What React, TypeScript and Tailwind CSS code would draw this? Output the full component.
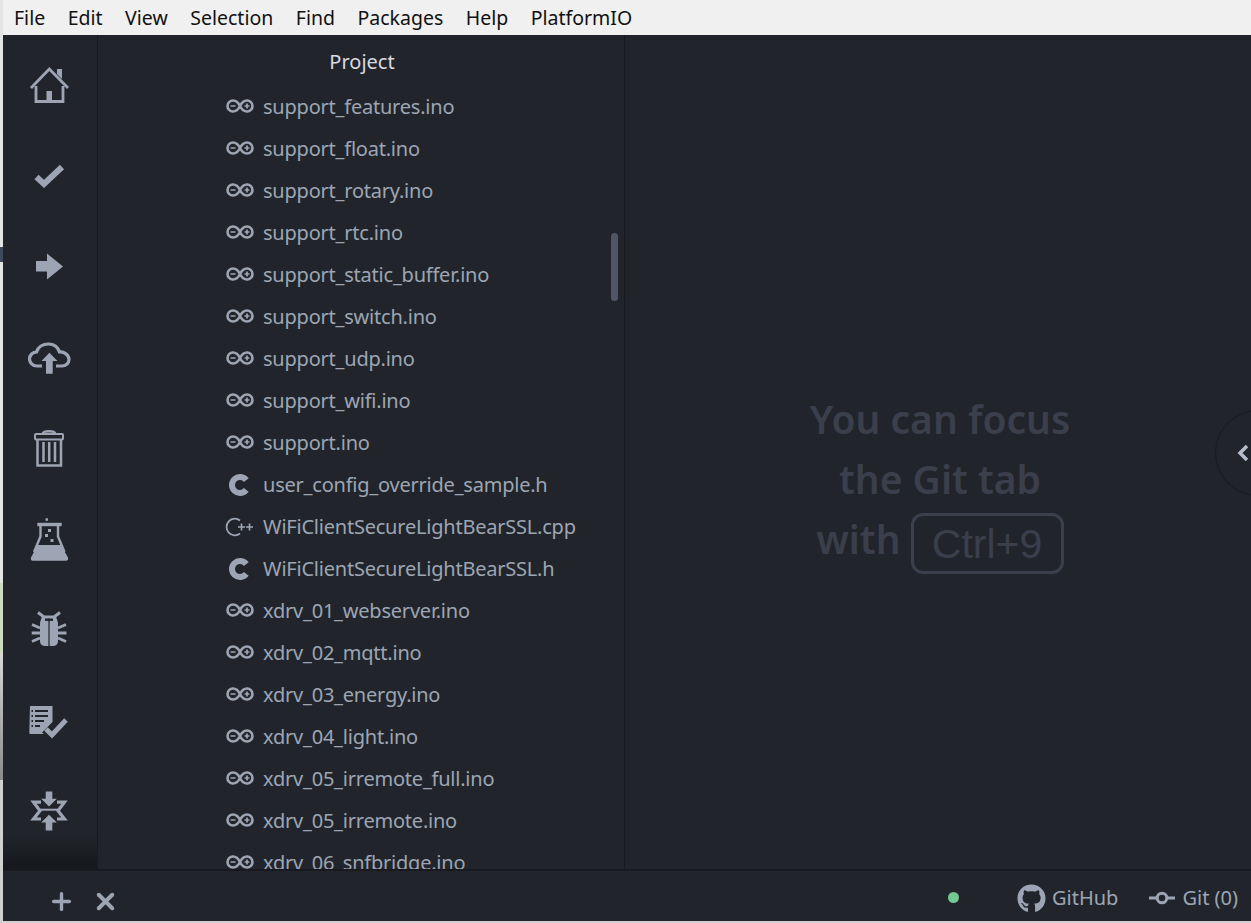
import { FaGithub } from 'react-icons/fa'
import { Plus, X } from 'lucide-react'

const menus = ['File', 'Edit', 'View', 'Selection', 'Find', 'Packages', 'Help', 'PlatformIO']

type Kind = 'ino' | 'c' | 'cpp'

const files: [string, Kind][] = [
  ['support_features.ino', 'ino'],
  ['support_float.ino', 'ino'],
  ['support_rotary.ino', 'ino'],
  ['support_rtc.ino', 'ino'],
  ['support_static_buffer.ino', 'ino'],
  ['support_switch.ino', 'ino'],
  ['support_udp.ino', 'ino'],
  ['support_wifi.ino', 'ino'],
  ['support.ino', 'ino'],
  ['user_config_override_sample.h', 'c'],
  ['WiFiClientSecureLightBearSSL.cpp', 'cpp'],
  ['WiFiClientSecureLightBearSSL.h', 'c'],
  ['xdrv_01_webserver.ino', 'ino'],
  ['xdrv_02_mqtt.ino', 'ino'],
  ['xdrv_03_energy.ino', 'ino'],
  ['xdrv_04_light.ino', 'ino'],
  ['xdrv_05_irremote_full.ino', 'ino'],
  ['xdrv_05_irremote.ino', 'ino'],
  ['xdrv_06_snfbridge.ino', 'ino'],
]

function FileIcon({ kind }: { kind: Kind }) {
  if (kind === 'ino') {
    return (
      <svg width="30" height="20" viewBox="0 1 30 20" fill="none" stroke="#9da5b4" className="shrink-0">
        <path d="M15 10C13 6 11.5 4.5 8 4.5A5.5 5.5 0 0 0 8 15.5C11.5 15.5 13 14 15 10C17 6 18.5 4.5 22 4.5A5.5 5.5 0 0 1 22 15.5C18.5 15.5 17 14 15 10Z" strokeWidth="2.6" />
        <path d="M5.5 10H10.5M19.5 10H24.5M22 7.5V12.5" strokeWidth="1.7" />
      </svg>
    )
  }
  if (kind === 'c') {
    return (
      <svg width="30" height="24" viewBox="0 0 30 24" fill="none" stroke="#9da5b4" className="shrink-0">
        <path d="M21.3 7.1A8 8 0 1 0 21.3 16.9" strokeWidth="6" />
      </svg>
    )
  }
  return (
    <svg width="30" height="24" viewBox="0 0 30 24" fill="none" stroke="#9da5b4" className="shrink-0">
      <path d="M15 5.5A8.3 8.3 0 1 0 15 18.5" strokeWidth="1.8" />
      <path d="M13 12H20M16.5 8.5V15.5M21 12H28M24.5 8.5V15.5" strokeWidth="1.6" />
    </svg>
  )
}

const c = '#9da5b4'

const sideIcons = [
  <g key="home">
    <path d="M6 27L24.3 8L43 27" fill="none" stroke={c} strokeWidth="2.8" />
    <path d="M11 25V40.5H38V25" fill="none" stroke={c} strokeWidth="2.8" />
    <path d="M32 8H37V18L32 13Z" fill={c} />
    <rect x="21.5" y="30" width="5.5" height="11" fill={c} />
  </g>,
  <path key="check" d="M11.5 25L19 32L37 15" fill="none" stroke={c} strokeWidth="6" />,
  <polygon key="arrow" points="11,18 22,18 22,10.5 38,23.5 22,36.5 22,28.5 11,28.5" fill={c} />,
  <g key="cloud">
    <path d="M17 32H12C7 32 4.5 28 4.5 25C4.5 21 8 18 11.5 18C13 13 18 10 23.5 10C29 10 33 13.5 34.5 18C39 17.5 44 21 44 25.5C44 29 41 32 37 32H31" fill="none" stroke={c} strokeWidth="3.2" />
    <polygon points="24.4,18.7 32.5,27 27.7,27 27.7,39.7 21,39.7 21,27 16.5,27" fill={c} />
  </g>,
  <g key="trash" fill="none" stroke={c}>
    <rect x="10" y="9" width="28" height="5.5" rx="1" strokeWidth="2" />
    <path d="M18 8.5C18 5.5 30 5.5 30 8.5" strokeWidth="2.5" />
    <path d="M12.5 15V40.5H36V15" strokeWidth="2.5" />
    <path d="M18.5 17V37M24.2 17V37M30 17V37" strokeWidth="2.5" />
  </g>,
  <g key="flask">
    <rect x="20.5" y="2.3" width="2.5" height="2.5" fill={c} />
    <path d="M12.3 8.5H36.7" stroke={c} strokeWidth="3.4" />
    <path d="M15.5 9V20.5L9 36M33 9V20.5L39.5 36" fill="none" stroke={c} strokeWidth="2.4" />
    <path d="M12.8 29H35.8L43 41.5Q43.5 44.7 41 44.7H8Q5.2 44.7 6 41.5Z" fill={c} />
    <rect x="23" y="13" width="3" height="3" fill={c} />
    <rect x="20" y="18" width="3" height="3" fill={c} />
    <rect x="25.5" y="23" width="3" height="3" fill={c} />
  </g>,
  <g key="bug" transform="translate(0 -2.5)">
    <path d="M13 8L19 12.5H29L35 8" fill="none" stroke={c} strokeWidth="3" />
    <path d="M17 12H23.4V41.5H20.5C17 41.5 15 39.5 15 36.5V18Z" fill={c} />
    <path d="M31 12H24.6V41.5H27.5C31 41.5 33 39.5 33 36.5V18Z" fill={c} />
    <rect x="20" y="14" width="8" height="2.4" fill="#21252b" />
    <path d="M7 20L15 23.5M6.7 28.5H15M7 37L15 33.5M41 20L33 23.5M41.5 28.5H33M41 37L33 33.5" fill="none" stroke={c} strokeWidth="2.8" />
  </g>,
  <g key="tasks">
    <path d="M5 8H27.5V24L17 34.5L19 36H5.5Q4.3 36 4.3 35Z" fill={c} />
    <path d="M10 13H23M10 18H23M10 23H19M10 28H15M6.5 13H8M6.5 18H8M6.5 23H8M6.5 28H8" stroke="#21252b" strokeWidth="2" />
    <path d="M21 31L27 37L41 22" fill="none" stroke={c} strokeWidth="5" />
  </g>,
  <g key="collapse" transform="translate(0 -1.5)">
    <polygon points="20.7,4 27.3,4 27.3,11.3 31.8,11.3 24,19 16.2,11.3 20.7,11.3" fill={c} />
    <polygon points="20.7,43 27.3,43 27.3,35 31.8,35 24,27.3 16.2,35 20.7,35" fill={c} />
    <path d="M16 14.7H8.5L15 23.2L8.5 31.5H16M32 14.7H39.5L33 23.2L39.5 31.5H32" fill="none" stroke={c} strokeWidth="3.2" />
    <path d="M14 22.2H34" stroke={c} strokeWidth="2" />
  </g>,
]

export default function App() {
  return (
    <div className="flex h-[923px] w-[1251px] overflow-hidden bg-[#21252b] font-['Noto_Sans',sans-serif]">
      {/* sliver of the window behind */}
      <div className="flex w-[3px] shrink-0 flex-col">
        <div className="h-[247px] bg-[#e4e4e4]" />
        <div className="h-[15px] bg-[#3c4a5c]" />
        <div className="h-[321px] bg-[#e4e4e4]" />
        <div className="h-[70px] bg-[#cddbbf]" />
        <div className="h-[127px] bg-gradient-to-b from-[#d8d8d8] to-[#8a8a8a]" />
        <div className="flex-1 bg-[#cfcfcf]" />
      </div>

      <div className="flex min-w-0 flex-1 flex-col">
        <div className="flex h-[35px] shrink-0 items-center gap-[22.5px] bg-[#f0f0f0] pt-[1px] pl-[11px] text-[19.5px] text-[#111]">
          {menus.map(m => (
            <span key={m}>{m}</span>
          ))}
        </div>

        <div className="relative flex min-h-0 flex-1">
          <div className="flex w-[95px] shrink-0 flex-col items-center border-r border-[#181a1f] bg-gradient-to-b from-[#21252b] from-[96%] to-[#15171b] pt-[4px] pr-[2px]">
            {sideIcons.map((icon, i) => (
              <div key={i} className="flex h-[91px] shrink-0 items-center justify-center">
                <svg width="48" height="48" viewBox="0 0 48 48">
                  {icon}
                </svg>
              </div>
            ))}
          </div>

          <div className="relative w-[527px] shrink-0 overflow-hidden border-r border-[#181a1f]">
            <div className="flex h-[52px] items-center justify-center pt-[2px] pl-[2px] text-[20px] text-[#d7dae0]">Project</div>
            <div className="-mt-[1px] pl-[127px]">
              {files.map(([name, kind]) => (
                <div key={name} className="flex h-[42px] items-center gap-[8px] text-[20px] tracking-[-0.22px] whitespace-nowrap text-[#9da5b4]">
                  <FileIcon kind={kind} />
                  <span>{name}</span>
                </div>
              ))}
            </div>
            <div className="absolute top-[198px] right-[6px] h-[68px] w-[7px] rounded-full bg-[#4f5564]" />
          </div>

          <div className="flex flex-1 items-start justify-center pt-[354px] pl-[4px]">
            <div className="flex flex-col items-center text-[39px] leading-[60px] font-semibold text-[#3a3f4b]">
              <div>You can focus</div>
              <div>the Git tab</div>
              <div className="flex items-start gap-[10px]">
                with
                <kbd className="mt-[4px] flex h-[61px] w-[153px] items-center justify-center rounded-[12px] border-[3px] border-[#3a3f4b] font-['Liberation_Sans',sans-serif] text-[41px] font-normal">
                  Ctrl+9
                </kbd>
              </div>
            </div>
          </div>

          <div className="absolute top-[375px] -right-[50px] flex h-[86px] w-[86px] items-center rounded-full border border-[#181a1f] bg-[#21252b] pl-[20px]">
            <svg width="14" height="18" viewBox="0 0 14 18" fill="none" stroke="#b5bccb" strokeWidth="3.5">
              <path d="M11 2L4 9L11 16" />
            </svg>
          </div>
        </div>

        <div className="flex h-[52px] shrink-0 items-center border-t-2 border-[#181a1f] pt-[4px] text-[20px] text-[#9da5b4]">
          <div className="mt-[6px] flex items-center gap-[17px] pl-[45px]">
            <Plus size={27} strokeWidth={3} />
            <X size={27} strokeWidth={3.5} />
          </div>
          <div className="ml-auto flex items-center pr-[13px]">
            <span className="mr-[58px] mb-[2px] h-[11px] w-[11px] rounded-full bg-[#73c990]" />
            <FaGithub size={29} />
            <span className="ml-[6px]">GitHub</span>
            <svg width="26" height="14" viewBox="0 0 26 14" fill="none" stroke="#9da5b4" strokeWidth="3" className="ml-[31px]">
              <circle cx="13" cy="7" r="4.8" />
              <path d="M0 7H8M18 7H26" />
            </svg>
            <span className="ml-[7px]">Git (0)</span>
          </div>
        </div>
        <div className="h-[2px] shrink-0 bg-[#cfcfcf]" />
      </div>
    </div>
  )
}
